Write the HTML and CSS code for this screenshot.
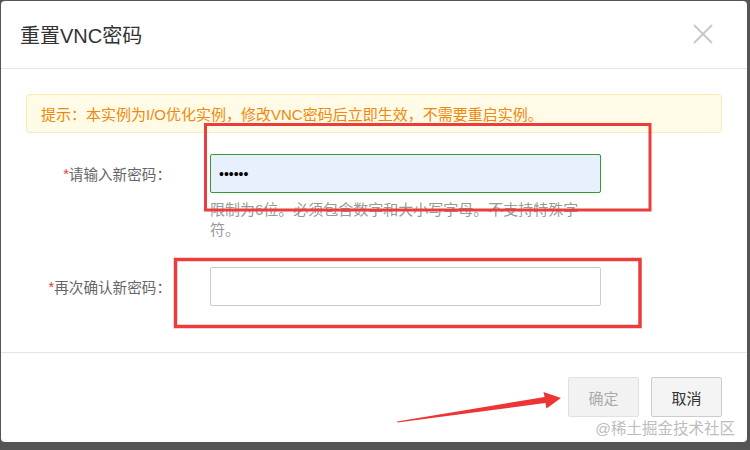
FILE: index.html
```html
<!DOCTYPE html>
<html lang="zh-CN">
<head>
    <meta charset="UTF-8">
    <meta name="viewport" content="width=device-width, initial-scale=1.0">
    <title>重置VNC密码</title>
    <link rel="stylesheet" href="styles.css">
</head>
<body>
    <div class="dialog">
        <div class="dialog-header">
            <h3 class="dialog-title">重置VNC密码</h3>
            <button type="button" class="close-btn" aria-label="关闭">
                <svg width="20" height="20" viewBox="0 0 20 20"><path d="M1 1L19 19M19 1L1 19" stroke="#c9c9c9" stroke-width="2"/></svg>
            </button>
        </div>
        <div class="dialog-body">
            <div class="tip">提示：本实例为I/O优化实例，修改VNC密码后立即生效，不需要重启实例。</div>
            <form class="pwd-form" id="pwdForm">
                <label class="field-label" for="newPwd"><span class="req">*</span>请输入新密码：</label>
                <div class="field">
                    <input type="password" id="newPwd" class="text-input filled" value="123456">
                    <p class="help">限制为6位。必须包含数字和大小写字母。不支持特殊字符。</p>
                </div>
                <label class="field-label" for="confirmPwd"><span class="req">*</span>再次确认新密码：</label>
                <div class="field">
                    <input type="password" id="confirmPwd" class="text-input">
                </div>
            </form>
        </div>
        <div class="dialog-footer">
            <button type="submit" form="pwdForm" class="btn btn-ok" disabled>确定</button>
            <button type="button" class="btn">取消</button>
        </div>
        <span class="watermark">@稀土掘金技术社区</span>
    </div>

    <!-- red annotation marks drawn over the screenshot -->
    <svg class="marks" width="750" height="450" viewBox="0 0 750 450">
        <rect x="205.5" y="124.5" width="444.5" height="85.5" fill="none" stroke="#e83e3e" stroke-width="3"/>
        <rect x="175.5" y="259.5" width="464.5" height="67" fill="none" stroke="#e83e3e" stroke-width="3.5"/>
        <polygon points="397,421.5 544.6,397 543.5,392 561,398 546.5,408.5 545.4,403 397.5,422.5" fill="#ee3535"/>
    </svg>
</body>
</html>
```

FILE: styles.css
```css
body {
    margin: 0;
    width: 750px;
    height: 450px;
    overflow: hidden;
    position: relative;
    background-color: #555555;
    font-family: "Liberation Sans", "Noto Sans CJK SC", sans-serif;
    color: #333333;
}

.dialog {
    position: relative;
    margin: 1px 3px 0 1px;
    height: 441px;
    background: #ffffff;
    border-radius: 4px;
    display: flex;
    flex-direction: column;
}

.dialog-header {
    height: 67px;
    border-bottom: 1px solid #e5e5e5;
    padding: 0 34px 0 19px;
    display: flex;
    align-items: center;
    justify-content: space-between;
}

.dialog-title {
    margin: 0;
    font-size: 20px;
    font-weight: normal;
    color: #333333;
}

.close-btn {
    width: 20px;
    height: 20px;
    padding: 0;
    border: none;
    background: none;
    display: flex;
    margin-top: -2px;
}

.dialog-body {
    flex: 1;
    padding: 25px 25px 0 25px;
}

.tip {
    height: 39px;
    box-sizing: border-box;
    display: flex;
    align-items: center;
    padding-left: 14px;
    background: #fffbe6;
    border: 1px solid #f9eab8;
    border-radius: 4px;
    color: #f0880e;
    font-size: 15px;
}

.pwd-form {
    margin-top: 21px;
    display: grid;
    grid-template-columns: 145px 391px;
    column-gap: 39px;
    row-gap: 27px;
}

.field-label {
    height: 39px;
    display: flex;
    align-items: center;
    justify-content: flex-end;
    font-size: 14.6px;
    color: #666666;
}

.req {
    color: #e33a3a;
}

.text-input {
    display: block;
    width: 391px;
    height: 39px;
    box-sizing: border-box;
    padding: 0 8px;
    border: 1px solid #cccccc;
    border-radius: 2px;
    background: #ffffff;
    font-family: "Liberation Sans", sans-serif;
    font-size: 14px;
    color: #000000;
    outline: none;
}

.text-input.filled {
    border-color: #2e9e2e;
    background: #e8f0fe;
}

.help {
    margin: 7px 0 0 0;
    width: 378px;
    font-size: 15px;
    line-height: 20px;
    color: #999999;
}

.dialog-footer {
    border-top: 1px solid #e5e5e5;
    padding: 24px 25px 25px;
    display: flex;
    justify-content: flex-end;
    gap: 12px;
}

.btn {
    width: 71px;
    height: 40px;
    padding: 0;
    font-family: "Liberation Sans", "Noto Sans CJK SC", sans-serif;
    font-size: 15px;
    color: #333333;
    background: #f4f4f4;
    border: 1px solid #cccccc;
    border-radius: 2px;
}

.btn:disabled {
    color: #aaaaaa;
    background: #f2f2f2;
    border-color: #e0e0e0;
}

.watermark {
    position: absolute;
    right: 12px;
    top: 415px;
    font-size: 15.5px;
    color: #bdbdbd;
    pointer-events: none;
}

.marks {
    position: absolute;
    left: 0;
    top: 0;
    pointer-events: none;
}
```
